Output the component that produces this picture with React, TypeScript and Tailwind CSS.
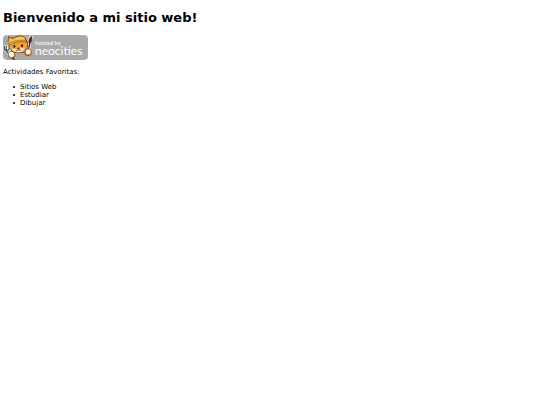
const activities = ["Sitios Web", "Estudiar", "Dibujar"];

const Cat = () => (
  <svg viewBox="0 0 93 78" className="h-[26px] w-[31px] shrink-0" aria-hidden="true">
    {/* fork */}
    <g fill="none" strokeLinecap="round">
      <path d="M4 34v9l6 5 7-4v-9M10 34v14l9 12" stroke="#fff" strokeWidth="7" />
      <path d="M4 34v9l6 5 7-4v-9M10 34v14l9 12" stroke="#50545c" strokeWidth="4" />
    </g>
    {/* brush */}
    <path d="M84 8l-5 14-5 26" fill="none" stroke="#fff" strokeWidth="12" strokeLinecap="round" />
    <path d="M81 22l-6 24" stroke="#352823" strokeWidth="5" />
    <path d="M85 4c4 8 1 15-3 20l-5-2c0-7 3-13 8-18z" fill="#7c1722" stroke="#30191d" strokeWidth="2" />
    {/* head */}
    <path
      d="M16 5l14 5C39 3 55 0 65 5l7 14c4 14 1 26-7 31-10 6-29 5-38-2-8-5-12-14-8-23l-4-4z"
      fill="#f2a23b"
      stroke="#fff"
      strokeWidth="5"
    />
    <path
      d="M16 5l14 5C39 3 55 0 65 5l7 14c4 14 1 26-7 31-10 6-29 5-38-2-8-5-12-14-8-23l-4-4z"
      fill="#f2a23b"
      stroke="#56361c"
      strokeWidth="3"
    />
    {/* hat */}
    <path d="M17 6l14 5C40 3 56 1 64 6l7 16c-13-4-34-2-49 8l-7-7z" fill="#efbb3e" stroke="#6b4618" strokeWidth="2" />
    <path d="M28 17c13-7 25-9 37-8" fill="none" stroke="#f8cd5c" strokeWidth="4" />
    <path d="M18 25c15-9 34-11 51-7" fill="none" stroke="#a96c22" strokeWidth="2" />
    {/* face */}
    <path d="M27 43c6-3 11-2 16 1 7-6 14-6 20-2-3 7-9 10-18 10-9 0-15-3-18-9z" fill="#fff0db" />
    <ellipse cx="34" cy="34" rx="3" ry="5" fill="#332119" />
    <ellipse cx="57" cy="32" rx="3" ry="5" fill="#332119" />
    <path d="M43 40l7-1-3 4zM38 46c5 2 7 1 8-3 2 3 6 4 10 1" fill="#a43b2e" stroke="#51301e" strokeWidth="2" />
    {/* paws */}
    <circle cx="26" cy="60" r="10" fill="#f09b36" stroke="#54351e" strokeWidth="2" />
    <circle cx="25" cy="58" r="8" fill="#fff" />
    <path d="M28 68l7 7" stroke="#453026" strokeWidth="4" />
    <circle cx="75" cy="52" r="10" fill="#f09b36" stroke="#54351e" strokeWidth="2" />
    <circle cx="76" cy="50" r="7" fill="#fff" />
  </svg>
);

const App = () => {
  return (
    <main className="px-[3px] py-2 font-['DejaVu_Sans',sans-serif] text-[7px] leading-2 text-black">
      <h1 className="text-[13px] font-bold leading-5">Bienvenido a mi sitio web!</h1>

      <a
        href="https://neocities.org"
        className="mt-[7px] flex h-[25px] w-[85px] items-center overflow-hidden rounded-sm bg-[#a9a9a9] font-[Lato,sans-serif] text-white"
      >
        <Cat />
        <span className="flex flex-col pl-px">
          <span className="text-[6px] leading-[7px]">hosted by</span>
          <span className="text-[12px] leading-[10px]">neocities</span>
        </span>
      </a>

      <p className="mt-2">Actividades Favoritas:</p>

      <ul className="mt-[7px] pl-[10px]">
        {activities.map((activity) => (
          <li
            key={activity}
            className="flex items-center gap-[5px] before:size-[2px] before:rounded-full before:bg-black before:content-['']"
          >
            {activity}
          </li>
        ))}
      </ul>
    </main>
  );
};

export default App;
